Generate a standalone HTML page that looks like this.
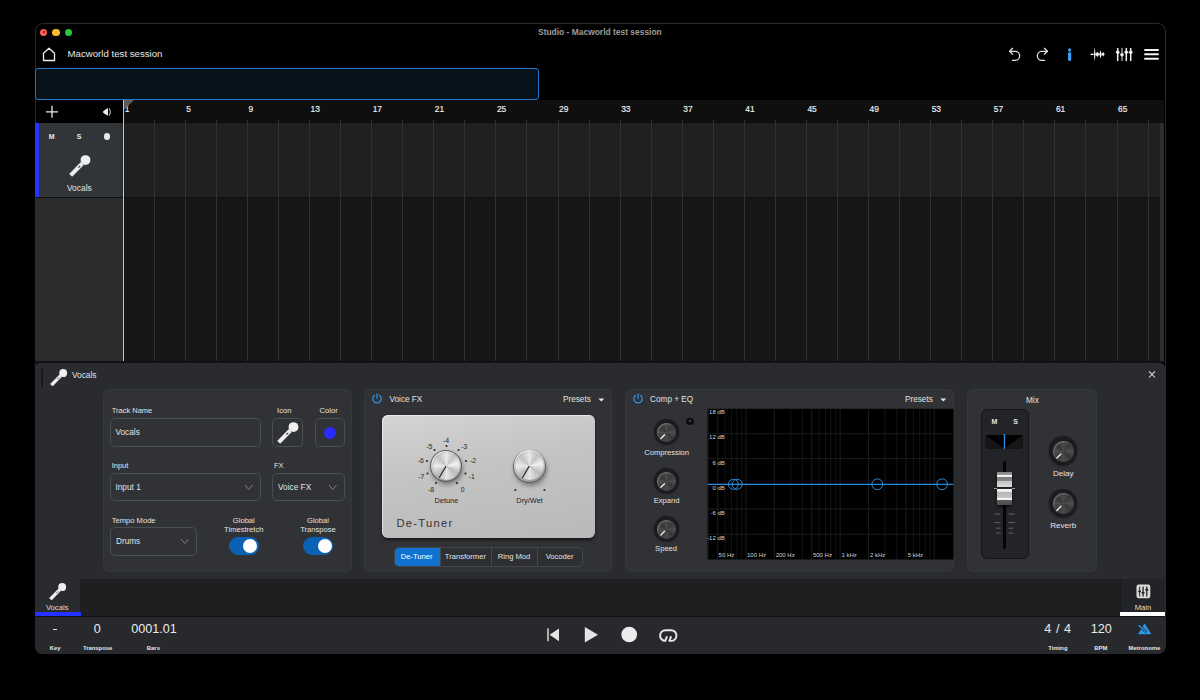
<!DOCTYPE html><html><head><meta charset="utf-8"><style>
*{box-sizing:border-box;margin:0;padding:0}
html,body{width:1200px;height:700px;background:#000;overflow:hidden}
body{font-family:"Liberation Sans",sans-serif;color:#e6e6e6;position:relative}
.a{position:absolute}
.t{position:absolute;white-space:nowrap;line-height:1}
.gl{position:absolute;width:1px;background:#303133}
.rn{position:absolute;white-space:nowrap;line-height:1;font-size:8.4px;color:#f2f2f2;top:105.4px;-webkit-text-stroke:0.15px #f2f2f2}
.card{position:absolute;background:#303235;border:1px solid #35383b;border-radius:6px}
.lbl{position:absolute;white-space:nowrap;line-height:1;font-size:7.6px;color:#dcdcdc}
.fld{position:absolute;border:1px solid #4a4d51;border-radius:5px;background:#303235}
.chev{position:absolute}
</style></head><body>
<div class="a" style="left:34.5px;top:23.3px;width:1131.5px;height:630.7px;border:1px solid #2a2a2a;border-radius:8px;background:#000"></div>
<div class="a" style="left:39.75px;top:28.5px;width:7.5px;height:7.5px;border-radius:50%;background:#fe5f57"></div>
<div class="a" style="left:42.5px;top:31.25px;width:2px;height:2px;border-radius:50%;background:#8a0000"></div>
<div class="a" style="left:52.2px;top:28.5px;width:7.5px;height:7.5px;border-radius:50%;background:#febc2e"></div>
<div class="a" style="left:64.5px;top:28.5px;width:7.5px;height:7.5px;border-radius:50%;background:#28c840"></div>
<div class="t" style="left:538px;top:27.5px;font-size:8.45px;font-weight:bold;color:#9c9c9c">Studio - Macworld test session</div>
<svg class="a" style="left:42px;top:47px" width="14" height="15" viewBox="0 0 14 15"><path d="M1.5 13.5 V6.2 L7 1.3 L12.5 6.2 V13.5 Z" fill="none" stroke="#eee" stroke-width="1.3" stroke-linejoin="round"/></svg>
<div class="t" style="left:67.5px;top:49px;font-size:9.66px;color:#e8e8e8">Macworld test session</div>
<div class="a" style="left:35px;top:68px;width:504px;height:32px;border:1px solid #1f78c8;border-radius:3px;background:#07121b"></div>
<div class="a" style="left:123px;top:100px;width:1041px;height:23px;background:#0f0f0f"></div>
<div class="a" style="left:35px;top:123px;width:4px;height:74px;background:#2635ff"></div>
<div class="a" style="left:39px;top:123px;width:84px;height:74px;background:linear-gradient(90deg,#323538 0%,#323538 94%,#2a2c2e 100%)"></div>
<div class="a" style="left:123px;top:123px;width:1037px;height:74px;background:#1f2022"></div>
<div class="a" style="left:35px;top:197px;width:88px;height:165px;background:#2b2c2e"></div>
<div class="a" style="left:123px;top:197px;width:1037px;height:165px;background:#151618"></div>
<div class="a" style="left:35px;top:197px;width:1125px;height:1px;background:#0e0f10"></div>
<div class="a" style="left:1160px;top:123px;width:4px;height:238px;background:#2e2f31"></div>
<div class="gl" style="left:153.81px;top:120px;height:241px"></div>
<div class="gl" style="left:184.86px;top:120px;height:241px"></div>
<div class="gl" style="left:215.91px;top:120px;height:241px"></div>
<div class="gl" style="left:246.97px;top:120px;height:241px"></div>
<div class="gl" style="left:278.02px;top:120px;height:241px"></div>
<div class="gl" style="left:309.08px;top:120px;height:241px"></div>
<div class="gl" style="left:340.13px;top:120px;height:241px"></div>
<div class="gl" style="left:371.19px;top:120px;height:241px"></div>
<div class="gl" style="left:402.25px;top:120px;height:241px"></div>
<div class="gl" style="left:433.30px;top:120px;height:241px"></div>
<div class="gl" style="left:464.36px;top:120px;height:241px"></div>
<div class="gl" style="left:495.41px;top:120px;height:241px"></div>
<div class="gl" style="left:526.46px;top:120px;height:241px"></div>
<div class="gl" style="left:557.52px;top:120px;height:241px"></div>
<div class="gl" style="left:588.58px;top:120px;height:241px"></div>
<div class="gl" style="left:619.63px;top:120px;height:241px"></div>
<div class="gl" style="left:650.68px;top:120px;height:241px"></div>
<div class="gl" style="left:681.74px;top:120px;height:241px"></div>
<div class="gl" style="left:712.79px;top:120px;height:241px"></div>
<div class="gl" style="left:743.85px;top:120px;height:241px"></div>
<div class="gl" style="left:774.90px;top:120px;height:241px"></div>
<div class="gl" style="left:805.96px;top:120px;height:241px"></div>
<div class="gl" style="left:837.01px;top:120px;height:241px"></div>
<div class="gl" style="left:868.07px;top:120px;height:241px"></div>
<div class="gl" style="left:899.12px;top:120px;height:241px"></div>
<div class="gl" style="left:930.18px;top:120px;height:241px"></div>
<div class="gl" style="left:961.24px;top:120px;height:241px"></div>
<div class="gl" style="left:992.29px;top:120px;height:241px"></div>
<div class="gl" style="left:1023.35px;top:120px;height:241px"></div>
<div class="gl" style="left:1054.40px;top:120px;height:241px"></div>
<div class="gl" style="left:1085.45px;top:120px;height:241px"></div>
<div class="gl" style="left:1116.51px;top:120px;height:241px"></div>
<div class="gl" style="left:1147.57px;top:120px;height:241px"></div>
<div class="rn" style="left:124.75px">1</div>
<div class="rn" style="left:186.36px">5</div>
<div class="rn" style="left:248.47px">9</div>
<div class="rn" style="left:310.58px">13</div>
<div class="rn" style="left:372.69px">17</div>
<div class="rn" style="left:434.80px">21</div>
<div class="rn" style="left:496.91px">25</div>
<div class="rn" style="left:559.02px">29</div>
<div class="rn" style="left:621.13px">33</div>
<div class="rn" style="left:683.24px">37</div>
<div class="rn" style="left:745.35px">41</div>
<div class="rn" style="left:807.46px">45</div>
<div class="rn" style="left:869.57px">49</div>
<div class="rn" style="left:931.68px">53</div>
<div class="rn" style="left:993.79px">57</div>
<div class="rn" style="left:1055.90px">61</div>
<div class="rn" style="left:1118.01px">65</div>
<svg class="a" style="left:123px;top:100px" width="12" height="12"><path d="M0 0 H11 L0 11 Z" fill="#5b5b5e"/></svg>
<div class="a" style="left:123px;top:100px;width:1px;height:262px;background:#c4c4c4"></div>
<svg class="a" style="left:1000px;top:40px" width="165" height="30" viewBox="1000 40 165 30"><g fill="none" stroke="#e4e4e4" stroke-width="1.25" stroke-linecap="round" stroke-linejoin="round"><path d="M1009.6 51.3 H1015.2 A4.5 4.5 0 0 1 1015.2 60.3 H1012.4"/><path d="M1012.6 48.3 L1009.6 51.3 L1012.6 54.2"/><path d="M1047.4 51.3 H1041.8 A4.5 4.5 0 0 0 1041.8 60.3 H1044.6"/><path d="M1044.4 48.3 L1047.4 51.3 L1044.4 54.2"/></g><g stroke="#3d9ff2" stroke-width="3.1" stroke-linecap="round"><path d="M1069.6 49.8 V50.1"/><path d="M1069.6 53.6 V59.5"/></g><g fill="#f0f0f0"><path d="M1089.7 54.3 L1092 53.4 L1093.9 54 L1094.7 47.3 L1095.5 54 L1097.3 51.8 L1099.3 54 L1100.5 50.3 L1101.7 54 L1103.3 52 L1104.7 54.3 L1103.3 56.6 L1101.7 54.6 L1100.5 58.5 L1099.3 54.6 L1097.3 57 L1095.5 54.6 L1094.7 61.3 L1093.9 54.6 L1092 55.2 Z"/></g><g stroke="#f0f0f0" stroke-width="1.5" stroke-linecap="round"><path d="M1117.7 48.6 V60.5"/><path d="M1126.3 48.6 V60.5"/><path d="M1130.7 48.6 V60.5"/></g><path d="M1122 48.6 V60.5" stroke="#9a9a9a" stroke-width="1.5" stroke-linecap="round"/><g fill="#f4f4f4"><circle cx="1117.7" cy="52.3" r="1.8"/><circle cx="1122" cy="54.8" r="1.8"/><circle cx="1126.3" cy="52.3" r="1.8"/><circle cx="1130.7" cy="52.3" r="1.8"/></g><g stroke="#f2f2f2" stroke-width="1.9" stroke-linecap="round"><path d="M1145 50 H1158"/><path d="M1145 54.3 H1158"/><path d="M1145 58.7 H1158"/></g></svg>
<svg class="a" style="left:45px;top:105px" width="14" height="14" viewBox="0 0 14 14"><path d="M7 0.8 V12.8 M1 6.8 H13" stroke="#ececec" stroke-width="1.3"/></svg>
<svg class="a" style="left:101px;top:106px" width="12" height="12" viewBox="0 0 12 12"><path d="M2 6 Q2 5.2 3 4.6 L7 2 V9.8 L3 7.4 Q2 6.8 2 6 Z" fill="#eaeaea"/><path d="M8.3 2.3 Q10.6 5.9 8.3 9.6" fill="none" stroke="#eaeaea" stroke-width="0.9"/></svg>
<div class="t" style="left:48.8px;top:133.3px;font-size:7px;font-weight:bold;color:#e8e8e8">M</div>
<div class="t" style="left:76.8px;top:133.3px;font-size:7px;font-weight:bold;color:#e8e8e8">S</div>
<div class="a" style="left:103.6px;top:133.1px;width:6.8px;height:6.8px;border-radius:50%;background:#e8e8e8"></div>
<svg class="a" style="left:68.6px;top:154.5px" width="22.00" height="22.00" viewBox="0 0 22 22"><path d="M0.4 18.89 L11.75 7.17 L14.55 9.89 L3.2 21.61 Z" fill="#efefef" stroke="#efefef" stroke-width="0.3" stroke-linejoin="round"/><circle cx="16.5" cy="5.1" r="4.95" fill="#efefef"/><path d="M10.9 11.1 L9.6 12.45" stroke="#3a3a3a" stroke-width="1.1" stroke-linecap="round"/></svg>
<div class="t" style="left:67px;top:183.5px;font-size:8.4px;color:#e4e4e4">Vocals</div>
<div class="a" style="left:35px;top:361px;width:1130px;height:2px;background:#111214"></div>
<div class="a" style="left:35px;top:362.6px;width:1130px;height:216.4px;background:#2a2b2e;border-radius:5px 5px 0 0"></div>
<div class="a" style="left:41.3px;top:368px;width:2px;height:19px;background:#18191a;border-radius:1px"></div>
<svg class="a" style="left:49.5px;top:368.5px" width="17.6" height="17.6" viewBox="0 0 22 22"><path d="M0.4 18.89 L11.75 7.17 L14.55 9.89 L3.2 21.61 Z" fill="#efefef" stroke="#efefef" stroke-width="0.3" stroke-linejoin="round"/><circle cx="16.5" cy="5.1" r="4.95" fill="#efefef"/><path d="M10.9 11.1 L9.6 12.45" stroke="#3a3a3a" stroke-width="1.1" stroke-linecap="round"/></svg>
<div class="t" style="left:72.00px;top:370.67px;font-size:8.3px;color:#e2e2e2;">Vocals</div>
<svg class="a" style="left:1146.6px;top:370px" width="10" height="10" viewBox="0 0 10 10"><path d="M2.1 1.4 L7.9 7.5 M7.9 1.4 L2.1 7.5" stroke="#dcdcdc" stroke-width="1.05"/></svg>
<div class="card" style="left:103px;top:389px;width:249px;height:183px"></div>
<div class="t" style="left:111.70px;top:406.85px;font-size:7.5px;color:#e2e2e2;">Track Name</div>
<div class="t" style="left:134.30px;width:300px;text-align:center;top:406.67px;font-size:7.6px;color:#e2e2e2;">Icon</div>
<div class="t" style="left:178.60px;width:300px;text-align:center;top:406.67px;font-size:7.6px;color:#e2e2e2;">Color</div>
<div class="fld" style="left:110px;top:418px;width:150.5px;height:28.5px"></div>
<div class="t" style="left:115.40px;top:428.47px;font-size:8.3px;color:#e2e2e2;">Vocals</div>
<div class="fld" style="left:272.3px;top:418px;width:30.5px;height:28.8px"></div>
<svg class="a" style="left:276.5px;top:421.5px" width="22.00" height="22.00" viewBox="0 0 22 22"><path d="M0.4 18.89 L11.75 7.17 L14.55 9.89 L3.2 21.61 Z" fill="#efefef" stroke="#efefef" stroke-width="0.3" stroke-linejoin="round"/><circle cx="16.5" cy="5.1" r="4.95" fill="#efefef"/><path d="M10.9 11.1 L9.6 12.45" stroke="#3a3a3a" stroke-width="1.1" stroke-linecap="round"/></svg>
<div class="fld" style="left:315px;top:418px;width:30px;height:28.8px"></div>
<div class="a" style="left:323.8px;top:426.7px;width:12.3px;height:12.3px;border-radius:50%;background:#2a2cff"></div>
<div class="t" style="left:111.70px;top:461.75px;font-size:7.5px;color:#e2e2e2;">Input</div>
<div class="t" style="left:273.90px;top:461.75px;font-size:7.5px;color:#e2e2e2;">FX</div>
<div class="fld" style="left:110px;top:472.5px;width:150.5px;height:28.5px"></div>
<div class="t" style="left:115.40px;top:482.97px;font-size:8.3px;color:#e2e2e2;">Input 1</div>
<svg class="a" style="left:243.5px;top:483.5px" width="9.5" height="6.5"><path d="M1 1 L4.75 5.5 L8.5 1" fill="none" stroke="#7d8084" stroke-width="1"/></svg>
<div class="fld" style="left:272.3px;top:472.5px;width:72.5px;height:28.5px"></div>
<div class="t" style="left:278.00px;top:482.97px;font-size:8.3px;color:#e2e2e2;">Voice FX</div>
<svg class="a" style="left:327.5px;top:483.5px" width="9.5" height="6.5"><path d="M1 1 L4.75 5.5 L8.5 1" fill="none" stroke="#7d8084" stroke-width="1"/></svg>
<div class="t" style="left:111.70px;top:516.67px;font-size:7.6px;color:#e2e2e2;">Tempo Mode</div>
<div class="fld" style="left:110px;top:527.3px;width:87px;height:28.5px"></div>
<div class="t" style="left:116.00px;top:537.86px;font-size:8.2px;color:#e2e2e2;">Drums</div>
<svg class="a" style="left:179.7px;top:537.6px" width="9.5" height="6.5"><path d="M1 1 L4.75 5.5 L8.5 1" fill="none" stroke="#7d8084" stroke-width="1"/></svg>
<div class="t" style="left:93.80px;width:300px;text-align:center;top:516.67px;font-size:7.6px;color:#e2e2e2;">Global</div>
<div class="t" style="left:93.80px;width:300px;text-align:center;top:525.87px;font-size:7.6px;color:#e2e2e2;">Timestretch</div>
<div class="t" style="left:168.00px;width:300px;text-align:center;top:516.67px;font-size:7.6px;color:#e2e2e2;">Global</div>
<div class="t" style="left:168.00px;width:300px;text-align:center;top:525.87px;font-size:7.6px;color:#e2e2e2;">Transpose</div>
<div class="a" style="left:228.6px;top:537px;width:30.4px;height:18px;border-radius:9px;background:#0b62b4"></div>
<div class="a" style="left:243.4px;top:539px;width:14px;height:14px;border-radius:50%;background:#fff"></div>
<div class="a" style="left:302.9px;top:537px;width:30.4px;height:18px;border-radius:9px;background:#0b62b4"></div>
<div class="a" style="left:317.7px;top:539px;width:14px;height:14px;border-radius:50%;background:#fff"></div>
<div class="card" style="left:364px;top:389px;width:248px;height:183px"></div>
<svg class="a" style="left:371.2px;top:393.0px" width="12" height="12" viewBox="0 0 12 12"><path d="M3.3 2.5 A4.2 4.2 0 1 0 8.7 2.5" fill="none" stroke="#2f93e6" stroke-width="1.25" stroke-linecap="round"/><path d="M6 1.2 V5.2" stroke="#2f93e6" stroke-width="1.25" stroke-linecap="round"/></svg>
<div class="t" style="left:389.50px;top:396.26px;font-size:8.2px;color:#e2e2e2;">Voice FX</div>
<div class="t" style="left:563.00px;top:396.26px;font-size:8.2px;color:#e2e2e2;">Presets</div>
<svg class="a" style="left:597px;top:397px" width="9" height="6"><path d="M1.3 1.6 H7.3 L4.3 4.6 Z" fill="#e6e6e6"/></svg>
<div class="a" style="left:381.6px;top:415px;width:213px;height:123px;border-radius:6px;background:linear-gradient(170deg,#d4d4d4 0%,#c4c4c4 40%,#b9b9b9 100%);box-shadow:0 2px 3px rgba(0,0,0,.55), inset 1px 1px 0 rgba(255,255,255,.55)"></div>
<svg class="a" style="left:0;top:0" width="1200" height="700"><circle cx="436" cy="483" r="1.05" fill="#2a2a2a"/><circle cx="427.5" cy="473.5" r="1.05" fill="#2a2a2a"/><circle cx="427" cy="461" r="1.05" fill="#2a2a2a"/><circle cx="434.5" cy="450" r="1.05" fill="#2a2a2a"/><circle cx="446.5" cy="446" r="1.05" fill="#2a2a2a"/><circle cx="458.5" cy="450" r="1.05" fill="#2a2a2a"/><circle cx="466" cy="461" r="1.05" fill="#2a2a2a"/><circle cx="465.5" cy="473.5" r="1.05" fill="#2a2a2a"/><circle cx="457" cy="483" r="1.05" fill="#2a2a2a"/><circle cx="515.4" cy="490" r="1.05" fill="#2a2a2a"/><circle cx="544.4" cy="490" r="1.05" fill="#2a2a2a"/></svg>
<div class="t" style="left:281.00px;width:300px;text-align:center;top:486.76px;font-size:6.9px;color:#262626;">-8</div>
<div class="t" style="left:271.30px;width:300px;text-align:center;top:473.76px;font-size:6.9px;color:#262626;">-7</div>
<div class="t" style="left:270.80px;width:300px;text-align:center;top:457.76px;font-size:6.9px;color:#262626;">-6</div>
<div class="t" style="left:279.30px;width:300px;text-align:center;top:444.16px;font-size:6.9px;color:#262626;">-5</div>
<div class="t" style="left:296.00px;width:300px;text-align:center;top:437.76px;font-size:6.9px;color:#262626;">-4</div>
<div class="t" style="left:314.30px;width:300px;text-align:center;top:444.16px;font-size:6.9px;color:#262626;">-3</div>
<div class="t" style="left:323.00px;width:300px;text-align:center;top:457.76px;font-size:6.9px;color:#262626;">-2</div>
<div class="t" style="left:321.80px;width:300px;text-align:center;top:473.76px;font-size:6.9px;color:#262626;">-1</div>
<div class="t" style="left:312.60px;width:300px;text-align:center;top:486.76px;font-size:6.9px;color:#262626;">0</div>
<div class="a" style="left:430.20px;top:450.00px;width:32px;height:32px;border-radius:50%;background:#5e5e5e;box-shadow:1px 3px 4px rgba(0,0,0,.35)"></div><div class="a" style="left:431.00px;top:450.80px;width:30.4px;height:30.4px;border-radius:50%;background:linear-gradient(160deg,#fafafa,#bdbdbd 60%,#8a8a8a)"></div><div class="a" style="left:432.50px;top:452.30px;width:27.4px;height:27.4px;border-radius:50%;background:conic-gradient(#e9e9e9,#c3c3c3 10%,#f2f2f2 22%,#bcbcbc 35%,#e6e6e6 50%,#b9b9b9 62%,#ececec 75%,#c2c2c2 88%,#e9e9e9);box-shadow:inset 0 0 1px #777"></div><svg class="a" style="left:0;top:0" width="1200" height="700"><path d="M446.20 466.00 L439.14 477.74" stroke="#1a1a1a" stroke-width="1.05"/></svg>
<div class="a" style="left:512.90px;top:449.50px;width:33px;height:33px;border-radius:50%;background:#5e5e5e;box-shadow:1px 3px 4px rgba(0,0,0,.35)"></div><div class="a" style="left:513.70px;top:450.30px;width:31.4px;height:31.4px;border-radius:50%;background:linear-gradient(160deg,#fafafa,#bdbdbd 60%,#8a8a8a)"></div><div class="a" style="left:515.20px;top:451.80px;width:28.4px;height:28.4px;border-radius:50%;background:conic-gradient(#e9e9e9,#c3c3c3 10%,#f2f2f2 22%,#bcbcbc 35%,#e6e6e6 50%,#b9b9b9 62%,#ececec 75%,#c2c2c2 88%,#e9e9e9);box-shadow:inset 0 0 1px #777"></div><svg class="a" style="left:0;top:0" width="1200" height="700"><path d="M529.40 466.00 L522.09 478.17" stroke="#1a1a1a" stroke-width="1.05"/></svg>
<div class="t" style="left:296.40px;width:300px;text-align:center;top:497.14px;font-size:7.4px;color:#1e1e1e;">Detune</div>
<div class="t" style="left:379.60px;width:300px;text-align:center;top:497.14px;font-size:7.4px;color:#1e1e1e;">Dry/Wet</div>
<div class="t" style="left:396.40px;top:517.72px;font-size:11.2px;color:#333;letter-spacing:1.3px">De-Tuner</div>
<div class="a" style="left:393.7px;top:546.5px;width:189.5px;height:20.2px;border:1px solid #44474b;border-radius:5px;background:#2d2f32;overflow:hidden"><div class="a" style="left:0;top:0;width:45px;height:100%;background:#0f72d0"></div><div class="a" style="left:96.7px;top:0;width:1px;height:100%;background:#44474b"></div><div class="a" style="left:142px;top:0;width:1px;height:100%;background:#44474b"></div><div class="a" style="left:45px;top:0;width:1px;height:100%;background:#44474b"></div></div>
<div class="t" style="left:266.60px;width:300px;text-align:center;top:553.07px;font-size:7.6px;color:#fff;">De-Tuner</div>
<div class="t" style="left:315.40px;width:300px;text-align:center;top:553.07px;font-size:7.6px;color:#e2e2e2;">Transformer</div>
<div class="t" style="left:364.00px;width:300px;text-align:center;top:553.07px;font-size:7.6px;color:#e2e2e2;">Ring Mod</div>
<div class="t" style="left:409.60px;width:300px;text-align:center;top:553.07px;font-size:7.6px;color:#e2e2e2;">Vocoder</div>
<div class="card" style="left:625px;top:389px;width:328.5px;height:183px"></div>
<svg class="a" style="left:632px;top:393.0px" width="12" height="12" viewBox="0 0 12 12"><path d="M3.3 2.5 A4.2 4.2 0 1 0 8.7 2.5" fill="none" stroke="#2f93e6" stroke-width="1.25" stroke-linecap="round"/><path d="M6 1.2 V5.2" stroke="#2f93e6" stroke-width="1.25" stroke-linecap="round"/></svg>
<div class="t" style="left:650.10px;top:396.26px;font-size:8.2px;color:#e2e2e2;">Comp + EQ</div>
<div class="t" style="left:905.00px;top:396.26px;font-size:8.2px;color:#e2e2e2;">Presets</div>
<svg class="a" style="left:938.5px;top:397px" width="9" height="6"><path d="M1.3 1.6 H7.3 L4.3 4.6 Z" fill="#e6e6e6"/></svg>
<div class="a" style="left:653.80px;top:419.30px;width:25px;height:25px;border-radius:50%;background:#1b1c1e;box-shadow:0 1px 2px rgba(0,0,0,.5)"></div><div class="a" style="left:657.30px;top:423.10px;width:19px;height:19px;border-radius:50%;background:conic-gradient(#4a4a4c,#3a3a3c 12%,#4d4d4f 25%,#363638 37%,#4a4a4c 50%,#39393b 62%,#4c4c4e 75%,#37373a 87%,#4a4a4c);box-shadow:inset 1px 1px 1px rgba(255,255,255,.25)"></div><svg class="a" style="left:0;top:0" width="1200" height="700"><path d="M664.52 434.88 L660.89 438.51" stroke="#e8e8e8" stroke-width="1.45" stroke-linecap="round"/></svg>
<div class="a" style="left:653.80px;top:468.10px;width:25px;height:25px;border-radius:50%;background:#1b1c1e;box-shadow:0 1px 2px rgba(0,0,0,.5)"></div><div class="a" style="left:657.30px;top:471.90px;width:19px;height:19px;border-radius:50%;background:conic-gradient(#4a4a4c,#3a3a3c 12%,#4d4d4f 25%,#363638 37%,#4a4a4c 50%,#39393b 62%,#4c4c4e 75%,#37373a 87%,#4a4a4c);box-shadow:inset 1px 1px 1px rgba(255,255,255,.25)"></div><svg class="a" style="left:0;top:0" width="1200" height="700"><path d="M664.52 483.68 L660.89 487.31" stroke="#e8e8e8" stroke-width="1.45" stroke-linecap="round"/></svg>
<div class="a" style="left:653.80px;top:515.70px;width:25px;height:25px;border-radius:50%;background:#1b1c1e;box-shadow:0 1px 2px rgba(0,0,0,.5)"></div><div class="a" style="left:657.30px;top:519.50px;width:19px;height:19px;border-radius:50%;background:conic-gradient(#4a4a4c,#3a3a3c 12%,#4d4d4f 25%,#363638 37%,#4a4a4c 50%,#39393b 62%,#4c4c4e 75%,#37373a 87%,#4a4a4c);box-shadow:inset 1px 1px 1px rgba(255,255,255,.25)"></div><svg class="a" style="left:0;top:0" width="1200" height="700"><path d="M664.52 531.28 L660.89 534.91" stroke="#e8e8e8" stroke-width="1.45" stroke-linecap="round"/></svg>
<div class="t" style="left:516.70px;width:300px;text-align:center;top:448.57px;font-size:7.6px;color:#e2e2e2;">Compression</div>
<div class="t" style="left:516.60px;width:300px;text-align:center;top:496.57px;font-size:7.6px;color:#e2e2e2;">Expand</div>
<div class="t" style="left:516.10px;width:300px;text-align:center;top:544.57px;font-size:7.6px;color:#e2e2e2;">Speed</div>
<div class="a" style="left:686.3px;top:417.5px;width:7.5px;height:7.5px;border-radius:50%;background:#0e0e0f;box-shadow:0 1px 1px rgba(255,255,255,.06)"></div>
<div class="a" style="left:689.2px;top:420.2px;width:1.8px;height:1.8px;border-radius:50%;background:#555"></div>
<svg class="a" style="left:0;top:0" width="1200" height="700"><rect x="707.5" y="408.8" width="246.0" height="150.7" fill="#000"/><line x1="708.55" y1="408.8" x2="708.55" y2="559.5" stroke="#141414" stroke-width="1"/><line x1="717.67" y1="408.8" x2="717.67" y2="559.5" stroke="#1c1c1c" stroke-width="1"/><line x1="725.12" y1="408.8" x2="725.12" y2="559.5" stroke="#141414" stroke-width="1"/><line x1="731.42" y1="408.8" x2="731.42" y2="559.5" stroke="#141414" stroke-width="1"/><line x1="736.88" y1="408.8" x2="736.88" y2="559.5" stroke="#141414" stroke-width="1"/><line x1="741.69" y1="408.8" x2="741.69" y2="559.5" stroke="#141414" stroke-width="1"/><line x1="746.00" y1="408.8" x2="746.00" y2="559.5" stroke="#1c1c1c" stroke-width="1"/><line x1="774.33" y1="408.8" x2="774.33" y2="559.5" stroke="#1c1c1c" stroke-width="1"/><line x1="790.90" y1="408.8" x2="790.90" y2="559.5" stroke="#141414" stroke-width="1"/><line x1="802.65" y1="408.8" x2="802.65" y2="559.5" stroke="#141414" stroke-width="1"/><line x1="811.77" y1="408.8" x2="811.77" y2="559.5" stroke="#1c1c1c" stroke-width="1"/><line x1="819.22" y1="408.8" x2="819.22" y2="559.5" stroke="#141414" stroke-width="1"/><line x1="825.52" y1="408.8" x2="825.52" y2="559.5" stroke="#141414" stroke-width="1"/><line x1="830.98" y1="408.8" x2="830.98" y2="559.5" stroke="#141414" stroke-width="1"/><line x1="835.79" y1="408.8" x2="835.79" y2="559.5" stroke="#141414" stroke-width="1"/><line x1="840.10" y1="408.8" x2="840.10" y2="559.5" stroke="#1c1c1c" stroke-width="1"/><line x1="868.43" y1="408.8" x2="868.43" y2="559.5" stroke="#1c1c1c" stroke-width="1"/><line x1="885.00" y1="408.8" x2="885.00" y2="559.5" stroke="#141414" stroke-width="1"/><line x1="896.75" y1="408.8" x2="896.75" y2="559.5" stroke="#141414" stroke-width="1"/><line x1="905.87" y1="408.8" x2="905.87" y2="559.5" stroke="#1c1c1c" stroke-width="1"/><line x1="913.32" y1="408.8" x2="913.32" y2="559.5" stroke="#141414" stroke-width="1"/><line x1="919.62" y1="408.8" x2="919.62" y2="559.5" stroke="#141414" stroke-width="1"/><line x1="925.08" y1="408.8" x2="925.08" y2="559.5" stroke="#141414" stroke-width="1"/><line x1="929.89" y1="408.8" x2="929.89" y2="559.5" stroke="#141414" stroke-width="1"/><line x1="934.20" y1="408.8" x2="934.20" y2="559.5" stroke="#1c1c1c" stroke-width="1"/><line x1="707.5" y1="433.7" x2="953.5" y2="433.7" stroke="#1c1c1c" stroke-width="1"/><line x1="707.5" y1="458.6" x2="953.5" y2="458.6" stroke="#1c1c1c" stroke-width="1"/><line x1="707.5" y1="509.0" x2="953.5" y2="509.0" stroke="#1c1c1c" stroke-width="1"/><line x1="707.5" y1="534.3" x2="953.5" y2="534.3" stroke="#1c1c1c" stroke-width="1"/><line x1="707.5" y1="484.3" x2="953.5" y2="484.3" stroke="#2a8ad8" stroke-width="1.2"/><circle cx="733.4" cy="484.3" r="5.0" fill="none" stroke="#2a8ad8" stroke-width="1"/><circle cx="737.2" cy="484.3" r="5.0" fill="none" stroke="#2a8ad8" stroke-width="1"/><circle cx="877.3" cy="484.3" r="5.4" fill="none" stroke="#2a8ad8" stroke-width="1"/><circle cx="942.1" cy="484.3" r="5.4" fill="none" stroke="#2a8ad8" stroke-width="1"/></svg>
<div class="t" style="left:424.80px;width:300px;text-align:right;top:409.42px;font-size:6.0px;color:#d2d2d2;">18 dB</div>
<div class="t" style="left:424.80px;width:300px;text-align:right;top:434.12px;font-size:6.0px;color:#d2d2d2;">12 dB</div>
<div class="t" style="left:424.80px;width:300px;text-align:right;top:460.02px;font-size:6.0px;color:#d2d2d2;">6 dB</div>
<div class="t" style="left:424.80px;width:300px;text-align:right;top:484.72px;font-size:6.0px;color:#d2d2d2;">0 dB</div>
<div class="t" style="left:424.80px;width:300px;text-align:right;top:509.52px;font-size:6.0px;color:#d2d2d2;">-6 dB</div>
<div class="t" style="left:424.80px;width:300px;text-align:right;top:534.72px;font-size:6.0px;color:#d2d2d2;">-12 dB</div>
<div class="t" style="left:718.60px;top:551.82px;font-size:6.0px;color:#d2d2d2;">50 Hz</div>
<div class="t" style="left:747.00px;top:551.82px;font-size:6.0px;color:#d2d2d2;">100 Hz</div>
<div class="t" style="left:775.70px;top:551.82px;font-size:6.0px;color:#d2d2d2;">200 Hz</div>
<div class="t" style="left:812.90px;top:551.82px;font-size:6.0px;color:#d2d2d2;">500 Hz</div>
<div class="t" style="left:841.40px;top:551.82px;font-size:6.0px;color:#d2d2d2;">1 kHz</div>
<div class="t" style="left:870.00px;top:551.82px;font-size:6.0px;color:#d2d2d2;">2 kHz</div>
<div class="t" style="left:907.70px;top:551.82px;font-size:6.0px;color:#d2d2d2;">5 kHz</div>
<div class="card" style="left:966.5px;top:389px;width:130px;height:183px"></div>
<div class="t" style="left:882.40px;width:300px;text-align:center;top:396.17px;font-size:8.3px;color:#e2e2e2;">Mix</div>
<div class="a" style="left:981px;top:408.7px;width:47.5px;height:150px;border-radius:6px;background:#232427;border:1px solid #151617"></div>
<div class="t" style="left:844.30px;width:300px;text-align:center;top:418.07px;font-size:7px;font-weight:bold;color:#e6e6e6;">M</div>
<div class="t" style="left:865.50px;width:300px;text-align:center;top:418.07px;font-size:7px;font-weight:bold;color:#e6e6e6;">S</div>
<svg class="a" style="left:985px;top:434px" width="40" height="16" viewBox="985 434 40 16"><rect x="985.7" y="435" width="37.2" height="13.6" rx="2" fill="#000"/><path d="M985.7 435.3 L1004.4 448.6 H987.7 Q985.7 448.6 985.7 446.6 Z" fill="#161617"/><path d="M1022.9 435.3 L1004.4 448.6 H1020.9 Q1022.9 448.6 1022.9 446.6 Z" fill="#161617"/><line x1="1004.4" y1="433.9" x2="1004.4" y2="448.9" stroke="#2a8fe6" stroke-width="1.3"/></svg>
<div class="a" style="left:1002.8px;top:460.6px;width:3.4px;height:88px;border-radius:1.7px;background:#050505"></div>
<svg class="a" style="left:0;top:0" width="1200" height="700"><g stroke="#6b6c6e" stroke-width="0.9"><line x1="994.5" y1="514" x2="1000.5" y2="514"/><line x1="1008.5" y1="514" x2="1014.8" y2="514"/><line x1="994.5" y1="522.6" x2="1000.5" y2="522.6"/><line x1="1008.5" y1="522.6" x2="1014.8" y2="522.6"/><line x1="996" y1="528.2" x2="1000.5" y2="528.2"/><line x1="1008.5" y1="528.2" x2="1013.3" y2="528.2"/><line x1="996" y1="533" x2="1000.5" y2="533"/><line x1="1008.5" y1="533" x2="1013.3" y2="533"/></g></svg>
<div class="a" style="left:996.8px;top:471.8px;width:15.3px;height:33.2px;box-shadow:0 2px 3px rgba(0,0,0,.6);background:linear-gradient(180deg,#808080 0%,#a0a0a0 9%,#f6f6f6 10%,#eeeeee 15%,#7c7c7c 16.5%,#8a8a8a 27%,#c4c4c4 28.5%,#dadada 45%,#1e1e1e 46%,#262626 50%,#fbfbfb 51.5%,#e6e6e6 60%,#b6b6b6 62%,#c2c2c2 77%,#f8f8f8 78.5%,#eeeeee 84%,#5c5c5c 85.5%,#4a4a4a 100%)"></div>
<div class="a" style="left:993.6px;top:488px;width:3.2px;height:0.8px;background:#9a9a9a"></div>
<div class="a" style="left:1012.1px;top:488px;width:3px;height:0.8px;background:#9a9a9a"></div>
<div class="a" style="left:1048.75px;top:436.35px;width:28.5px;height:28.5px;border-radius:50%;background:#1b1c1e;box-shadow:0 1px 2px rgba(0,0,0,.5)"></div><div class="a" style="left:1052.85px;top:440.75px;width:21.3px;height:21.3px;border-radius:50%;background:conic-gradient(#4a4a4c,#3a3a3c 12%,#4d4d4f 25%,#363638 37%,#4a4a4c 50%,#39393b 62%,#4c4c4e 75%,#37373a 87%,#4a4a4c);box-shadow:inset 1px 1px 1px rgba(255,255,255,.25)"></div><svg class="a" style="left:0;top:0" width="1200" height="700"><path d="M1060.94 453.96 L1056.87 458.03" stroke="#e8e8e8" stroke-width="1.45" stroke-linecap="round"/></svg>
<div class="a" style="left:1048.75px;top:488.75px;width:28.5px;height:28.5px;border-radius:50%;background:#1b1c1e;box-shadow:0 1px 2px rgba(0,0,0,.5)"></div><div class="a" style="left:1052.85px;top:493.15px;width:21.3px;height:21.3px;border-radius:50%;background:conic-gradient(#4a4a4c,#3a3a3c 12%,#4d4d4f 25%,#363638 37%,#4a4a4c 50%,#39393b 62%,#4c4c4e 75%,#37373a 87%,#4a4a4c);box-shadow:inset 1px 1px 1px rgba(255,255,255,.25)"></div><svg class="a" style="left:0;top:0" width="1200" height="700"><path d="M1060.94 506.36 L1056.87 510.43" stroke="#e8e8e8" stroke-width="1.45" stroke-linecap="round"/></svg>
<div class="t" style="left:913.30px;width:300px;text-align:center;top:469.74px;font-size:8.1px;color:#e2e2e2;">Delay</div>
<div class="t" style="left:913.20px;width:300px;text-align:center;top:522.34px;font-size:8.1px;color:#e2e2e2;">Reverb</div>
<div class="a" style="left:35px;top:579px;width:45px;height:37px;background:#2a2b2e"></div>
<div class="a" style="left:80px;top:579px;width:1040px;height:37px;background:#1e1f21"></div>
<div class="a" style="left:1120px;top:579px;width:45px;height:37px;background:#222326;border-left:1px solid #18191b"></div>
<div class="a" style="left:35px;top:612px;width:45.5px;height:4px;background:#2433ff"></div>
<div class="a" style="left:1120px;top:612px;width:45px;height:4px;background:#fdfdfd"></div>
<svg class="a" style="left:48.6px;top:582.5px" width="17.60" height="17.60" viewBox="0 0 22 22"><path d="M0.4 18.89 L11.75 7.17 L14.55 9.89 L3.2 21.61 Z" fill="#efefef" stroke="#efefef" stroke-width="0.3" stroke-linejoin="round"/><circle cx="16.5" cy="5.1" r="4.95" fill="#efefef"/><path d="M10.9 11.1 L9.6 12.45" stroke="#3a3a3a" stroke-width="1.1" stroke-linecap="round"/></svg>
<div class="t" style="left:-92.80px;width:300px;text-align:center;top:604.18px;font-size:7.7px;color:#dedede;">Vocals</div>
<svg class="a" style="left:1136.4px;top:583.6px" width="16" height="16" viewBox="0 0 16 16"><rect x="0.5" y="0.5" width="13.8" height="13.8" rx="2.2" fill="#dadada"/><g stroke-width="1.3"><path d="M3.6 2.6 V12.4" stroke="#4a4a4c"/><path d="M7.1 2.6 V12.4" stroke="#242528"/><path d="M10.8 2.6 V12.4" stroke="#242528"/></g><g fill="#18191a"><rect x="2.3" y="6.6" width="2.6" height="1.6"/><rect x="5.6" y="8.1" width="3" height="1.4"/><rect x="9.3" y="5.1" width="3" height="1.4"/></g></svg>
<div class="t" style="left:993.00px;width:300px;text-align:center;top:604.18px;font-size:7.7px;color:#dedede;">Main</div>
<div class="a" style="left:35px;top:616px;width:1130px;height:1px;background:#111214"></div>
<div class="a" style="left:35px;top:617px;width:1130px;height:36.5px;background:#28292c;border-radius:0 0 7px 7px"></div>
<div class="a" style="left:53.4px;top:628.6px;width:3.8px;height:1.3px;background:#e6e6e6"></div>
<div class="t" style="left:-52.80px;width:300px;text-align:center;top:623.03px;font-size:12.6px;color:#ececec;">0</div>
<div class="t" style="left:131.30px;top:623.03px;font-size:12.6px;color:#ececec;">0001.01</div>
<div class="t" style="left:-94.90px;width:300px;text-align:center;top:645.61px;font-size:5.9px;font-weight:bold;color:#e6e6e6;">Key</div>
<div class="t" style="left:-52.40px;width:300px;text-align:center;top:645.61px;font-size:5.9px;font-weight:bold;color:#e6e6e6;">Transpose</div>
<div class="t" style="left:3.40px;width:300px;text-align:center;top:645.61px;font-size:5.9px;font-weight:bold;color:#e6e6e6;">Bars</div>
<svg class="a" style="left:0;top:0" width="1200" height="700"><rect x="547.3" y="628.4" width="1.4" height="12.8" fill="#e4e4e4"/><path d="M559 628.4 V641.2 L549.6 634.8 Z" fill="#e4e4e4"/><path d="M584.8 627 V642.5 L598 634.75 Z" fill="#e4e4e4"/><circle cx="629.2" cy="634.5" r="7.85" fill="#ececec"/><path d="M666.8 636.9 L665.3 640.9 A5.35 5.35 0 0 1 665.55 630.2 H671.15 A5.35 5.35 0 0 1 671.15 640.9 H669.4 L670.9 636.9" fill="none" stroke="#e8e8e8" stroke-width="1.9" stroke-linejoin="round" stroke-linecap="round"/></svg>
<div class="t" style="left:1044.20px;top:622.63px;font-size:12.6px;color:#ececec;word-spacing:1.2px">4 / 4</div>
<div class="t" style="left:1090.80px;top:622.63px;font-size:12.6px;color:#ececec;">120</div>
<svg class="a" style="left:1136px;top:622px" width="18" height="14" viewBox="0 0 18 14"><path d="M8.6 1.8 L15.0 12.0 H2.4 Z" fill="#2a9bf0" stroke="#2a9bf0" stroke-width="0.4" stroke-linejoin="round"/><path d="M2.9 3.4 L9.4 9.3" stroke="#26272a" stroke-width="2.9" stroke-linecap="round"/><path d="M2.9 3.4 L9.4 9.3" stroke="#2a9bf0" stroke-width="1.3" stroke-linecap="round"/></svg>
<div class="t" style="left:907.90px;width:300px;text-align:center;top:645.61px;font-size:5.9px;font-weight:bold;color:#e6e6e6;">Timing</div>
<div class="t" style="left:950.80px;width:300px;text-align:center;top:645.61px;font-size:5.9px;font-weight:bold;color:#e6e6e6;">BPM</div>
<div class="t" style="left:994.40px;width:300px;text-align:center;top:645.61px;font-size:5.9px;font-weight:bold;color:#e6e6e6;">Metronome</div>
</body></html>
